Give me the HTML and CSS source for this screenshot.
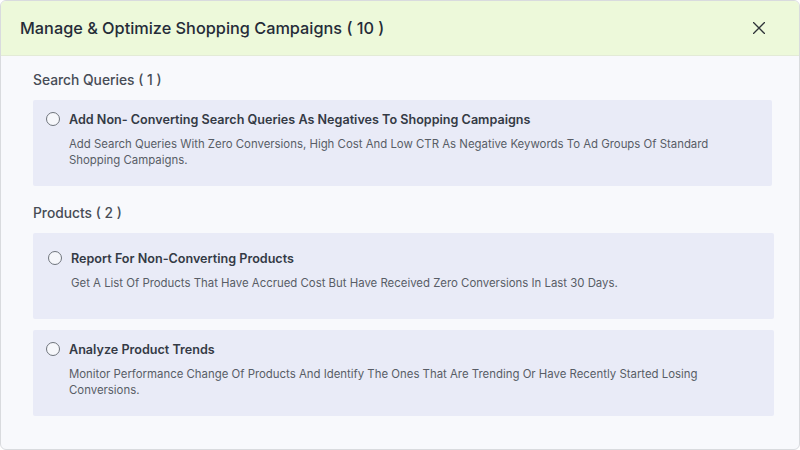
FILE: index.html
```html
<!DOCTYPE html>
<html>
<head>
<meta charset="utf-8">
<link rel="stylesheet" href="styles.css">
</head>
<body>
<div class="modal">
  <div class="modal-header">
    <h1 class="modal-title">Manage &amp; Optimize Shopping Campaigns ( 10 )</h1>
    <button class="close-btn" aria-label="Close">
      <svg width="12" height="12" viewBox="0 0 12 12"><path d="M0.5 0.5L11.5 11.5M11.5 0.5L0.5 11.5" stroke="#2e3338" stroke-width="1.3" fill="none" stroke-linecap="round"/></svg>
    </button>
  </div>
  <div class="modal-body">
    <h2 class="section-title">Search Queries ( 1 )</h2>
    <div class="card">
      <div class="card-head">
        <span class="radio"></span>
        <span class="card-title">Add Non- Converting Search Queries As Negatives To Shopping Campaigns</span>
      </div>
      <p class="card-desc">Add Search Queries With Zero Conversions, High Cost And Low CTR As Negative Keywords To Ad Groups Of Standard Shopping Campaigns.</p>
    </div>
    <h2 class="section-title section-gap">Products ( 2 )</h2>
    <div class="card-list">
      <div class="card card-wide card-shift">
        <div class="card-head">
          <span class="radio"></span>
          <span class="card-title">Report For Non-Converting Products</span>
        </div>
        <p class="card-desc">Get A List Of Products That Have Accrued Cost But Have Received Zero Conversions In Last 30 Days.</p>
      </div>
      <div class="card card-wide">
        <div class="card-head">
          <span class="radio"></span>
          <span class="card-title">Analyze Product Trends</span>
        </div>
        <p class="card-desc">Monitor Performance Change Of Products And Identify The Ones That Are Trending Or Have Recently Started Losing Conversions.</p>
      </div>
    </div>
  </div>
</div>
</body>
</html>
```
FILE: styles.css
```css
* { box-sizing: border-box; }
html, body { margin: 0; padding: 0; background: #ffffff; }
body { font-family: Inter, "Noto Sans", sans-serif; }

.modal {
  width: 800px;
  height: 450px;
  border: 1px solid #d9dbde;
  border-radius: 6px;
  background: #f8f9fc;
  overflow: hidden;
}

.modal-header {
  height: 55px;
  background: #edf9da;
  border-bottom: 1px solid #e3ebd6;
  display: flex;
  align-items: center;
  justify-content: space-between;
  padding: 0 34px 0 19px;
}

.modal-title {
  margin: 0;
  font-size: 16.3px;
  font-weight: 500;
  color: #252c38;
}

.close-btn {
  border: 0;
  background: transparent;
  padding: 0;
  width: 12px;
  height: 12px;
  display: flex;
  margin-top: -1px;
}

.modal-body {
  padding: 14px 0 0 32px;
}

.section-title {
  margin: 0 0 10px 0;
  font-size: 13.8px;
  line-height: 20px;
  font-weight: 500;
  color: #474c55;
}

.section-gap { margin-top: 17px; }

.card-list {
  display: flex;
  flex-direction: column;
  gap: 11px;
}

.card {
  width: 739px;
  min-height: 86px;
  background: #e9ebf7;
  border-radius: 2px;
  padding: 10px 13px 12px 13px;
}

.card-wide { width: 741px; }
.card-shift { padding: 16px 15px 12px 15px; }

.card-head {
  display: flex;
  align-items: center;
  gap: 9px;
  height: 18px;
}

.radio {
  width: 14px;
  height: 14px;
  border: 1.4px solid #6f747c;
  border-radius: 50%;
  background: #f6f7fb;
  flex: none;
}

.card-title {
  font-size: 12.6px;
  font-weight: 600;
  color: #343a45;
}

.card-desc {
  margin: 8px 0 0 23px;
  font-size: 11.4px;
  line-height: 16px;
  color: #585d66;
}
```
